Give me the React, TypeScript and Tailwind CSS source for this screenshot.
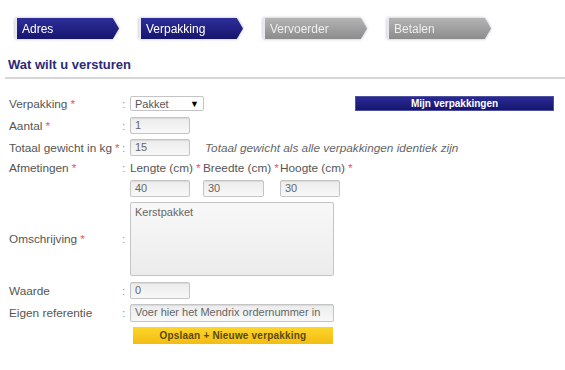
import React from 'react';

const steps = [
  { label: 'Adres', active: true },
  { label: 'Verpakking', active: true },
  { label: 'Vervoerder', active: false },
  { label: 'Betalen', active: false },
];

function Star() {
  return <span className="text-[#e0566a] ml-[3px]">*</span>;
}

function Field({ value, w, className = '' }: { value: string; w: string; className?: string }) {
  return (
    <div
      className={`${w} ${className} h-[17px] border border-[#c4c4c4] rounded-[2px] bg-gradient-to-b from-[#ececec] to-[#f8f8f8] shadow-[inset_0_1px_1px_rgba(0,0,0,0.08)] pl-[4px] text-[11px] leading-[15px] text-[#666] whitespace-nowrap overflow-hidden`}
    >
      {value}
    </div>
  );
}

function Row({ label, star, children, className = '' }: { label: string; star?: boolean; children?: React.ReactNode; className?: string }) {
  return (
    <div className={`flex items-center shrink-0 ${className}`}>
      <div className="w-[113px] shrink-0 whitespace-nowrap">
        {label}
        {star && <Star />}
      </div>
      <div className="w-[8px] shrink-0 text-[#999]">:</div>
      <div className="flex-1 flex items-center">{children}</div>
    </div>
  );
}

export default function App() {
  return (
    <div className="w-[565px] h-[370px] bg-white overflow-hidden font-['Liberation_Sans',Arial,sans-serif] text-[11.8px] leading-[14px] text-[#555]">
      {/* Step tabs */}
      <div className="flex gap-[20px] pl-[15px] pt-[18px]">
        {steps.map((s) => (
          <div key={s.label} className="drop-shadow-[0_0_1.5px_rgba(120,120,160,0.6)]">
            <div
              className={`w-[104px] h-[21px] pl-[5px] flex items-center text-[12px] ${
                s.active
                  ? 'bg-gradient-to-b from-[#2e2e9a] to-[#16166e] text-white'
                  : 'bg-gradient-to-b from-[#b4b4b4] to-[#8c8c8c] text-[#eeeeee]'
              } [clip-path:polygon(0_0,94%_0,100%_50%,94%_100%,0_100%)] border-l-2 border-[#e8e8f0]`}
            >
              {s.label}
            </div>
          </div>
        ))}
      </div>

      {/* Heading */}
      <div className="px-[8px] pt-[18px] pb-[5px] text-[13px] leading-[15px] font-bold text-[#2b2a78]">Wat wilt u versturen</div>
      <div className="ml-[5px] h-[2px] bg-[#d6d6d6]" />

      {/* Form */}
      <div className="pl-[9px] pt-[17px] flex flex-col">
        <Row label="Verpakking" star className="h-[15px]">
          <div className="w-[74px] h-[15px] border border-[#c4c4c4] rounded-[2px] bg-white flex items-center justify-between pl-[4px] pr-[4px] text-[11px] text-[#555]">
            <span>Pakket</span>
            <span className="text-[9px] text-black">▼</span>
          </div>
          <div className="ml-[151px] w-[199px] h-[15px] bg-gradient-to-b from-[#2a2a96] to-[#16166e] border border-[#5050a0] flex items-center justify-center text-white font-bold text-[10px]">
            Mijn verpakkingen
          </div>
        </Row>
        <Row label="Aantal" star className="mt-[6px] h-[17px]">
          <Field value="1" w="w-[60px]" />
        </Row>
        <Row label="Totaal gewicht in kg" star className="mt-[5px] h-[17px]">
          <Field value="15" w="w-[60px]" />
          <span className="ml-[15px] italic text-[#666] whitespace-nowrap">Totaal gewicht als alle verpakkingen identiek zijn</span>
        </Row>
        <Row label="Afmetingen" star className="mt-[3px] h-[17px]">
          <span className="w-[73px] whitespace-nowrap">Lengte (cm)<Star /></span>
          <span className="w-[77px] whitespace-nowrap">Breedte (cm)<Star /></span>
          <span className="whitespace-nowrap">Hoogte (cm)<Star /></span>
        </Row>
        <div className="flex mt-[4px] ml-[121px]">
          <Field value="40" w="w-[60px]" />
          <Field value="30" w="w-[61px]" className="ml-[13px]" />
          <Field value="30" w="w-[60px]" className="ml-[16px]" />
        </div>
        <Row label="Omschrijving" star className="mt-[5px] h-[74px]">
          <div className="w-[204px] h-[74px] border border-[#c4c4c4] rounded-[2px] bg-gradient-to-b from-[#f8f8f8] to-[#ececec] pl-[4px] pt-[2px] text-[11px] text-[#666]">
            Kerstpakket
          </div>
        </Row>
        <Row label="Waarde" className="mt-[6px] h-[17px]">
          <Field value="0" w="w-[60px]" />
        </Row>
        <Row label="Eigen referentie" className="mt-[5px] h-[18px]">
          <Field value="Voer hier het Mendrix ordernummer in" w="w-[204px]" className="h-[18px]" />
        </Row>
        <div className="ml-[124px] mt-[5px] w-[200px] h-[17px] bg-gradient-to-b from-[#fdd52a] to-[#f2bd10] flex items-center justify-center text-[10px] font-bold text-[#5a4a10] tracking-[0.2px]">
          Opslaan + Nieuwe verpakking
        </div>
      </div>
    </div>
  );
}
